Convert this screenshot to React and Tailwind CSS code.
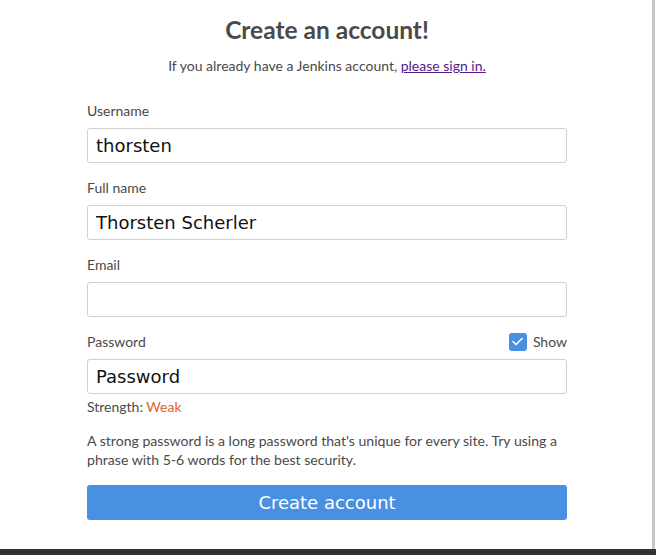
import React, { useState } from 'react';

const Field = ({ label, value }) => (
  <div className="mb-[15px]">
    <div className="flex items-center h-[19px] mb-[8px]">
      <label className="text-[14px] text-[#4a4a4a]">{label}</label>
    </div>
    <input
      readOnly
      value={value}
      className="w-full h-[35px] px-[8px] border border-[#d0d0d0] rounded-[3px] text-[18px] text-[#111] outline-none"
      style={{ fontFamily: '"DejaVu Sans", sans-serif' }}
    />
  </div>
);

const App = () => {
  const [show, setShow] = useState(true);

  return (
    <div className="w-[656px] h-[555px] flex flex-col bg-white overflow-hidden" style={{ fontFamily: 'Lato, "Liberation Sans", sans-serif' }}>
      <div className="flex flex-1 min-h-0">
        <div className="flex-1">
          <div className="w-[480px] ml-[87px] pt-[15px]">
            <h1 className="text-center text-[24.5px] leading-[30px] font-bold text-[#4a4a4a]">Create an account!</h1>
            <p className="text-center text-[14px] leading-[20px] mt-[11px] text-[#4a4a4a]">
              If you already have a Jenkins account,{' '}
              <a href="#" className="text-[#551a8b] underline">please sign in.</a>
            </p>

            <div className="mt-[25px]">
              <Field label="Username" value="thorsten" />
              <Field label="Full name" value="Thorsten Scherler" />
              <Field label="Email" value="" />

              {/* password row with show toggle */}
              <div className="flex items-center justify-between h-[19px] mb-[8px]">
                <label className="text-[14px] text-[#4a4a4a]">Password</label>
                <button onClick={() => setShow(!show)} className="flex items-center gap-[6px] text-[14px] text-[#4a4a4a]">
                  <span className={`w-[18px] h-[18px] rounded-[3px] flex items-center justify-center ${show ? 'bg-[#4a90e2]' : 'border border-[#ccc]'}`}>
                    {show && (
                      <svg width="11" height="9" viewBox="0 0 11 9" fill="none">
                        <path d="M1 4.5 L4 7.5 L10 1.5" stroke="white" strokeWidth="1.6" strokeLinecap="round" strokeLinejoin="round" />
                      </svg>
                    )}
                  </span>
                  Show
                </button>
              </div>
              <input
                readOnly
                type={show ? 'text' : 'password'}
                value="Password"
                className="w-full h-[35px] px-[8px] border border-[#d0d0d0] rounded-[3px] text-[18px] text-[#111] outline-none"
                style={{ fontFamily: '"DejaVu Sans", sans-serif' }}
              />
              <div className="mt-[3px] text-[14px] leading-[20px] text-[#4a4a4a]">
                Strength: <span className="text-[#e2631f]">Weak</span>
              </div>
              <p className="mt-[14px] text-[14.1px] leading-[19px] text-[#4a4a4a]">
                A strong password is a long password that's unique for every site. Try using a phrase with 5-6 words for the best security.
              </p>
              <button
                className="mt-[16px] w-full h-[35px] rounded-[3px] bg-[#4a90e2] text-white text-[18px]"
                style={{ fontFamily: '"DejaVu Sans", sans-serif' }}
              >
                Create account
              </button>
            </div>
          </div>
        </div>
        <div className="w-[3px] bg-[#c8c8c8]" />
        <div className="w-[1px] bg-white" />
      </div>
      <div className="h-[6px] bg-[#333]" />
    </div>
  );
};

export default App;
